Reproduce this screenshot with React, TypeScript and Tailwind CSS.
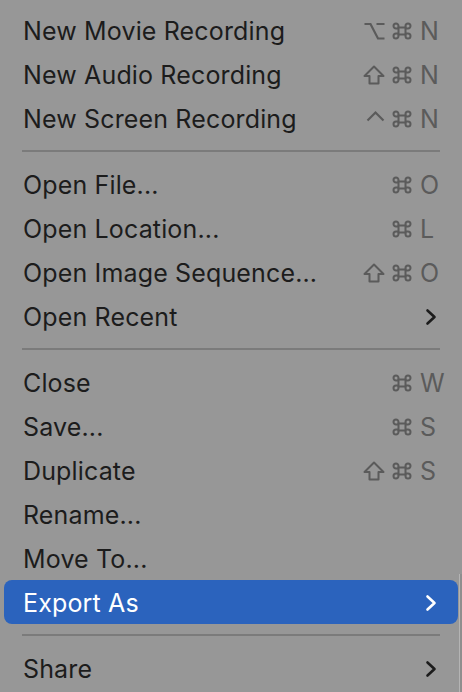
import React from 'react';

type Mod = 'opt' | 'cmd' | 'shift' | 'ctrl';

type Item =
  | { type: 'sep' }
  | { type: 'item'; label: string; mods?: Mod[]; keyChar?: string; submenu?: boolean; active?: boolean };

const items: Item[] = [
  { type: 'item', label: 'New Movie Recording', mods: ['opt', 'cmd'], keyChar: 'N' },
  { type: 'item', label: 'New Audio Recording', mods: ['shift', 'cmd'], keyChar: 'N' },
  { type: 'item', label: 'New Screen Recording', mods: ['ctrl', 'cmd'], keyChar: 'N' },
  { type: 'sep' },
  { type: 'item', label: 'Open File...', mods: ['cmd'], keyChar: 'O' },
  { type: 'item', label: 'Open Location...', mods: ['cmd'], keyChar: 'L' },
  { type: 'item', label: 'Open Image Sequence...', mods: ['shift', 'cmd'], keyChar: 'O' },
  { type: 'item', label: 'Open Recent', submenu: true },
  { type: 'sep' },
  { type: 'item', label: 'Close', mods: ['cmd'], keyChar: 'W' },
  { type: 'item', label: 'Save...', mods: ['cmd'], keyChar: 'S' },
  { type: 'item', label: 'Duplicate', mods: ['shift', 'cmd'], keyChar: 'S' },
  { type: 'item', label: 'Rename...' },
  { type: 'item', label: 'Move To...' },
  { type: 'item', label: 'Export As', submenu: true, active: true },
  { type: 'sep' },
  { type: 'item', label: 'Share', submenu: true },
];

function ModIcon({ mod }: { mod: Mod }) {
  if (mod === 'cmd') {
    return (
      <svg width="20" height="18" viewBox="0 0 20 18" fill="none" stroke="#5b5b5b" strokeWidth="2">
        <path d="M6.5 5.5h7v7h-7z" />
        <path d="M6.5 5.5V4A2.5 2.5 0 1 0 4 6.5h2.5M13.5 5.5V4A2.5 2.5 0 1 1 16 6.5h-2.5M6.5 12.5V14A2.5 2.5 0 1 1 4 11.5h2.5M13.5 12.5V14A2.5 2.5 0 1 0 16 11.5h-2.5" />
      </svg>
    );
  }
  if (mod === 'shift') {
    return (
      <svg width="22" height="20" viewBox="0 0 22 20" fill="none" stroke="#5b5b5b" strokeWidth="2" strokeLinejoin="round">
        <path d="M11 1.5L20.5 11H15.5V18.5H6.5V11H1.5Z" />
      </svg>
    );
  }
  if (mod === 'opt') {
    return (
      <svg width="21" height="18" viewBox="0 0 21 18" fill="none" stroke="#5b5b5b" strokeWidth="2.2">
        <path d="M0.5 2H6.5L14 16.5H20.5M12.5 2H20.5" />
      </svg>
    );
  }
  return (
    <svg width="19" height="18" viewBox="0 0 19 18" fill="none" stroke="#5b5b5b" strokeWidth="2.2">
      <path d="M1.5 10.5L9.5 2.5L17.5 10.5" />
    </svg>
  );
}

function Chevron({ color }: { color: string }) {
  return (
    <svg width="12" height="18" viewBox="0 0 12 18" fill="none" stroke={color} strokeWidth="2.6" strokeLinecap="round" strokeLinejoin="round">
      <path d="M2.5 2.5L9.5 9L2.5 15.5" />
    </svg>
  );
}

export default function App() {
  return (
    <div
      className="relative w-[462px] h-[692px] overflow-hidden bg-[#979797] pt-[8px]"
      style={{ fontFamily: 'Inter, "Noto Sans", sans-serif' }}
    >
      {items.map((it, i) =>
        it.type === 'sep' ? (
          <div key={i} className="h-[22px] flex items-center px-[22px]">
            <div className="w-full h-[2px] bg-[#7b7b7b]" />
          </div>
        ) : (
          <div
            key={i}
            className={`mx-[4px] h-[44px] flex items-center pl-[19px] pr-[18px] rounded-[8px] ${
              it.active ? 'bg-[#2b63bd] text-white' : 'text-[#1c1c1c]'
            }`}
          >
            <span className="flex-1 text-[25px] leading-none pt-[3px] tracking-[0.15px]">{it.label}</span>
            {it.mods && (
              <div className="flex items-center gap-[7px] pt-[2px]">
                {it.mods.map((m) => (
                  <ModIcon key={m} mod={m} />
                ))}
                <span className="w-[20px] text-[25px] leading-none pt-[1px] text-[#5b5b5b] ml-[1px]">{it.keyChar}</span>
              </div>
            )}
            {it.submenu && (
              <div className="pr-[3px] pt-[2px]">
                <Chevron color={it.active ? '#ffffff' : '#1c1c1c'} />
              </div>
            )}
          </div>
        )
      )}
      <div className="absolute right-0 top-[574px] bottom-0 w-[3px] bg-[#8e8e8e] border-l border-[#b4b4b4]" />
    </div>
  );
}
